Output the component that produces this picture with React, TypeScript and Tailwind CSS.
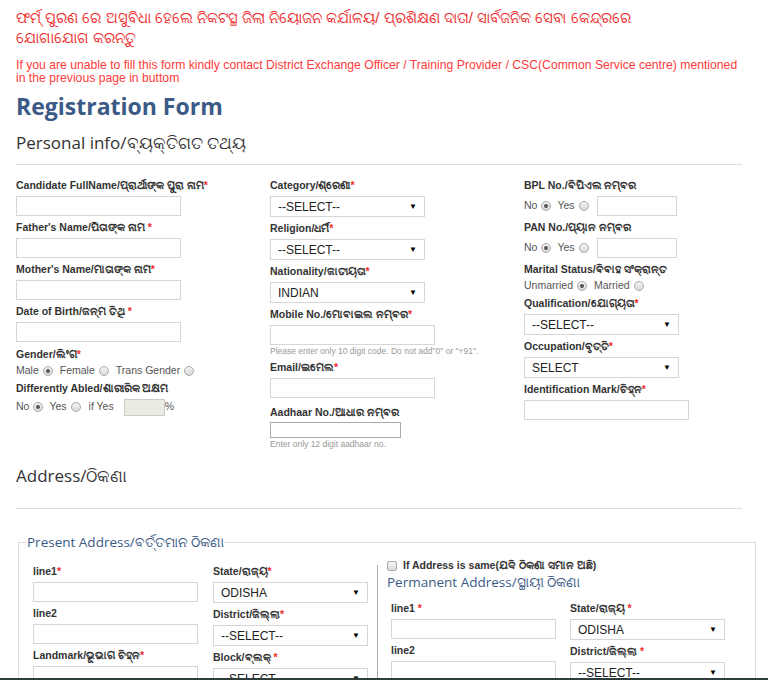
import React from "react";

const RED = "text-[#ee2a2a]";

const Req = ({ space }: { space?: boolean }) => (
  <span className="text-[#ee2a2a]">{space ? " *" : "*"}</span>
);

const Label = ({ text, req, space }: { text: string; req?: boolean; space?: boolean }) => (
  <div className="h-[14px] whitespace-nowrap text-[10.5px] font-bold leading-[14px] text-[#333]">
    {text}
    {req && <Req space={space} />}
  </div>
);

const TextBox = ({ w = "w-[165px]", h = "h-[20px]" }: { w?: string; h?: string }) => (
  <div className={`${w} ${h} border border-[#d6d6d6] bg-white`} />
);

const Dropdown = ({ value, w = "w-[155px]" }: { value: string; w?: string }) => (
  <div
    className={`${w} flex h-[21px] items-center justify-between border border-[#d6d6d6] bg-white pl-[7px] pr-[7px] font-['Liberation_Sans',sans-serif] text-[12px] text-[#222]`}
  >
    <span>{value}</span>
    <span className="text-[8px] text-black">▼</span>
  </div>
);

const Radio = ({ checked }: { checked?: boolean }) => (
  <span className="inline-flex h-[10px] w-[10px] items-center justify-center rounded-full border border-[#a9a9a9] bg-gradient-to-b from-[#f4f4f4] to-[#d9d9d9]">
    {checked && <span className="h-[4px] w-[4px] rounded-full bg-[#555]" />}
  </span>
);

const Opt = ({ text, checked }: { text: string; checked?: boolean }) => (
  <span className="inline-flex items-center gap-[4px]">
    <span>{text}</span>
    <Radio checked={checked} />
  </span>
);

const Field = ({ children }: { children: React.ReactNode }) => (
  <div className="flex flex-col gap-[4px] pb-[4px]">{children}</div>
);

const RadioRow = ({ children }: { children: React.ReactNode }) => (
  <div className="flex h-[20px] items-center gap-[6px] whitespace-nowrap text-[10.5px] text-[#555]">
    {children}
  </div>
);

const Hint = ({ text }: { text: string }) => (
  <div className="h-[10px] whitespace-nowrap text-[8.5px] leading-[10px] text-[#999]">{text}</div>
);

export default function App() {
  return (
    <div className="flex h-[680px] w-[768px] flex-col overflow-hidden bg-white font-['Liberation_Sans',sans-serif]">
      <div className="flex-1 overflow-hidden px-4">
        <div className={`whitespace-nowrap pt-[8px] text-[15px] leading-[20px] ${RED}`}>
          ଫର୍ମ୍ ପୁରଣ ରେ ଅସୁବିଧା ହେଲେ ନିକଟସ୍ଥ ଜିଲା ନିୟୋଜନ କର୍ଯାଳୟ/ ପ୍ରଶିକ୍ଷଣ ଦାତା/ ସାର୍ବଜନିକ ସେବା କେନ୍ଦ୍ରରେ
          <br />
          ଯୋଗାଯୋଗ କରନ୍ତୁ
        </div>
        <div className="mt-[11px] whitespace-nowrap text-[12.2px] leading-[13px] text-[#ff3b3b]">
          If you are unable to fill this form kindly contact District Exchange Officer / Training Provider / CSC(Common Service centre) mentioned
          <br />
          in the previous page in buttom
        </div>
        <h1 className="mt-[6px] font-['Open_Sans',sans-serif] text-[23px] font-bold leading-[30px] text-[#3b5a86]">
          Registration Form
        </h1>
        <h2 className="mt-[10px] font-['Open_Sans',sans-serif] text-[17px] leading-[24px] text-[#333]">
          Personal info/ବ୍ୟକ୍ତିଗତ ତଥ୍ୟ
        </h2>
        <div className="mt-[9px] h-px w-[726px] bg-[#ddd]" />

        <div className="mt-[13px] grid grid-cols-[254px_254px_1fr]">
          <div>
            <Field>
              <Label text="Candidate FullName/ପ୍ରାର୍ଥୀଙ୍କ ପୁରା ନାମ" req />
              <TextBox />
            </Field>
            <Field>
              <Label text="Father's Name/ପିତାଙ୍କ ନାମ" req space />
              <TextBox />
            </Field>
            <Field>
              <Label text="Mother's Name/ମାତାଙ୍କ ନାମ" req />
              <TextBox />
            </Field>
            <Field>
              <Label text="Date of Birth/ଜନ୍ମ ତିଥି" req space />
              <TextBox />
            </Field>
            <div className="pt-[1px]">
              <Label text="Gender/ଲିଂଗ" req />
              <div className="mt-[3px] flex h-[13px] items-center gap-[7px] whitespace-nowrap text-[10.5px] text-[#555]">
                <Opt text="Male" checked />
                <Opt text="Female" />
                <Opt text="Trans Gender" />
              </div>
              <div className="mt-[4px]">
                <Label text="Differently Abled/ଶାରୀରିକ ଅକ୍ଷମ" />
              </div>
              <div className="mt-[3px] flex h-[18px] items-center gap-[6px] whitespace-nowrap text-[10.5px] text-[#555]">
                <Opt text="No" checked />
                <Opt text="Yes" />
                <span className="ml-[2px]">if Yes</span>
                <span className="ml-[4px] h-[17px] w-[41px] border border-[#ccc] bg-[#ebebe4]" />
                <span className="-ml-[6px]">%</span>
              </div>
            </div>
          </div>

          <div>
            <Field>
              <Label text="Category/ଶ୍ରେଣୀ" req />
              <Dropdown value="--SELECT--" />
            </Field>
            <Field>
              <Label text="Religion/ଧର୍ମ" req />
              <Dropdown value="--SELECT--" />
            </Field>
            <Field>
              <Label text="Nationality/ଜାତୀୟତା" req />
              <Dropdown value="INDIAN" />
            </Field>
            <div className="flex flex-col gap-[4px]">
              <Label text="Mobile No./ମୋବାଇଲ ନମ୍ବର" req />
              <TextBox />
            </div>
            <div className="mt-[1px]">
              <Hint text={'Please enter only 10 digit code. Do not add"0" or "+91".'} />
            </div>
            <div className="mt-[4px]">
              <Field>
                <Label text="Email/ଇମେଲ" req />
                <TextBox />
              </Field>
            </div>
            <div className="mt-[3px] flex flex-col gap-[3px]">
              <Label text="Aadhaar No./ଆଧାର ନମ୍ବର" />
              <div className="h-[16px] w-[131px] border border-[#a9a9a9] bg-white" />
            </div>
            <div className="mt-[1px]">
              <Hint text="Enter only 12 digit aadhaar no." />
            </div>
          </div>

          <div>
            <Field>
              <Label text="BPL No./ବିପିଏଲ ନମ୍ବର" />
              <RadioRow>
                <Opt text="No" checked />
                <Opt text="Yes" />
                <span className="ml-[2px] h-[20px] w-[80px] border border-[#d6d6d6]" />
              </RadioRow>
            </Field>
            <Field>
              <Label text="PAN No./ପ୍ୟାନ ନମ୍ବର" />
              <RadioRow>
                <Opt text="No" checked />
                <Opt text="Yes" />
                <span className="ml-[2px] h-[20px] w-[80px] border border-[#d6d6d6]" />
              </RadioRow>
            </Field>
            <div className="pb-[4px]">
              <Label text="Marital Status/ବିବାହ ସଂକ୍ରାନ୍ତ" />
              <div className="mt-[3px] flex h-[13px] items-center gap-[7px] whitespace-nowrap text-[10.5px] text-[#555]">
                <Opt text="Unmarried" checked />
                <Opt text="Married" />
              </div>
            </div>
            <Field>
              <Label text="Qualification/ଯୋଗ୍ୟତା" req />
              <Dropdown value="--SELECT--" />
            </Field>
            <Field>
              <Label text="Occupation/ବୃତ୍ତି" req />
              <Dropdown value="SELECT" />
            </Field>
            <Field>
              <Label text="Identification Mark/ଚିହ୍ନ" req />
              <TextBox />
            </Field>
          </div>
        </div>

        <h2 className="mt-[15px] font-['Open_Sans',sans-serif] text-[17px] leading-[24px] text-[#333]">
          Address/ଠିକଣା
        </h2>
        <div className="mt-[20px] h-px w-[726px] bg-[#ddd]" />

        <fieldset className="ml-[2px] mt-[24px] w-[738px] border border-[#ddd] px-[8px]">
          <legend className="font-['Open_Sans',sans-serif] text-[13.5px] leading-[18px] text-[#3b5a86]">
            Present Address/ବର୍ତ୍ତମାନ ଠିକଣା
          </legend>
          <div className="-ml-[8px] flex">
            <div className="grid w-[358px] grid-cols-[180px_1fr] pl-[14px] pt-[13px]">
              <div>
                <Field>
                  <Label text="line1" req />
                  <TextBox />
                </Field>
                <Field>
                  <Label text="line2" />
                  <TextBox />
                </Field>
                <Field>
                  <Label text="Landmark/ଭୂଭାଗ ଚିହ୍ନ" req />
                  <TextBox />
                </Field>
              </div>
              <div>
                <Field>
                  <Label text="State/ରାଜ୍ୟ" req />
                  <Dropdown value="ODISHA" />
                </Field>
                <Field>
                  <Label text="District/ଜିଲ୍ଲା" req />
                  <Dropdown value="--SELECT--" />
                </Field>
                <Field>
                  <Label text="Block/ବ୍ଲକ୍" req space />
                  <Dropdown value="--SELECT--" />
                </Field>
              </div>
            </div>
            <div className="mt-[14px] flex-1 border-l border-[#aaa] pl-[9px]">
              <div className="-mt-[6px] flex h-[14px] items-center gap-[6px] whitespace-nowrap text-[10.5px] font-bold text-[#333]">
                <span className="h-[10px] w-[10px] rounded-[2px] border border-[#a9a9a9] bg-gradient-to-b from-[#f4f4f4] to-[#dcdcdc]" />
                <span>If Address is same(ଯଦି ଠିକଣା ସମାନ ଅଛି)</span>
              </div>
              <div className="font-['Open_Sans',sans-serif] text-[13.5px] leading-[18px] text-[#3b5a86]">
                Permanent Address/ସ୍ଥାୟୀ ଠିକଣା
              </div>
              <div className="mt-[10px] grid grid-cols-[179px_1fr] pl-[4px]">
                <div>
                  <Field>
                    <Label text="line1" req space />
                    <TextBox />
                  </Field>
                  <Field>
                    <Label text="line2" />
                    <TextBox />
                  </Field>
                </div>
                <div>
                  <Field>
                    <Label text="State/ରାଜ୍ୟ" req space />
                    <Dropdown value="ODISHA" />
                  </Field>
                  <Field>
                    <Label text="District/ଜିଲ୍ଲା" req space />
                    <Dropdown value="--SELECT--" />
                  </Field>
                </div>
              </div>
            </div>
          </div>
        </fieldset>
      </div>
      <div className="h-[2px] bg-[#2f3d3d]" />
    </div>
  );
}
